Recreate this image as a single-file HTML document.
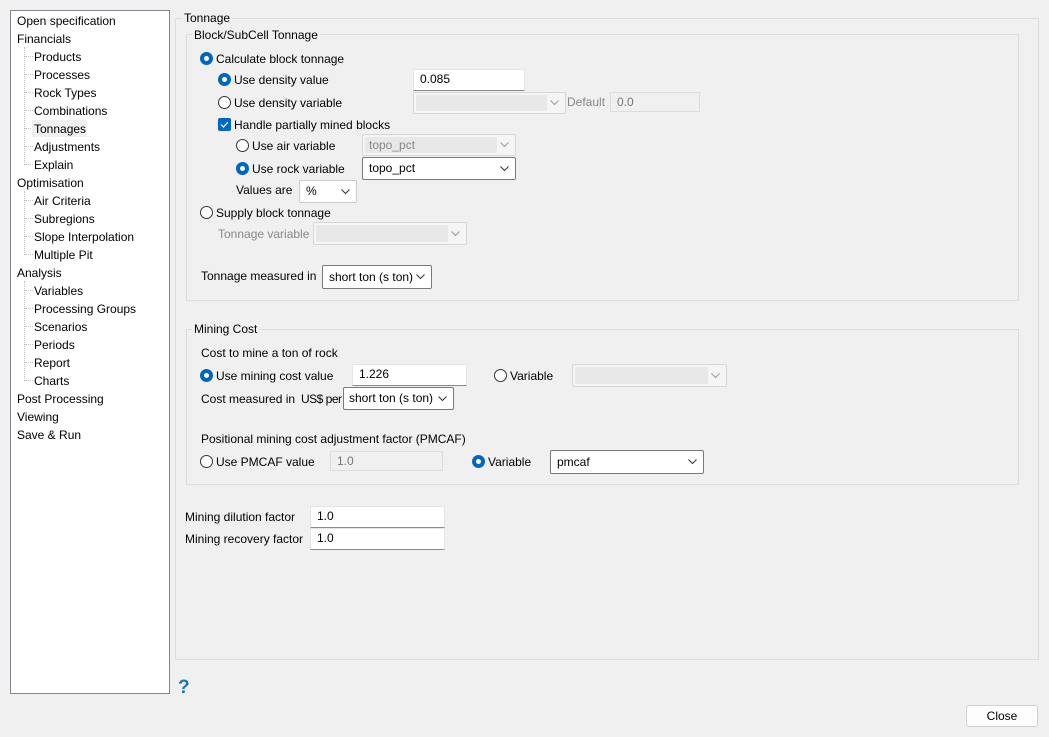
<!DOCTYPE html>
<html><head><meta charset="utf-8"><style>
*{box-sizing:border-box}
body{margin:0;width:1049px;height:737px;background:#f0f0f0;font-family:"Liberation Sans",sans-serif;font-size:12px;color:#000;position:relative;overflow:hidden}
.a{position:absolute;white-space:nowrap;line-height:14px}
.tree{position:absolute;left:10px;top:10px;width:160px;height:684px;background:#fff;border:1px solid #828790}
.grp{position:absolute;border:1px solid #dcdcdc}
.gl{position:absolute;background:#f0f0f0;padding:0 2px;line-height:14px}
.r{position:absolute;width:13px;height:13px;border-radius:50%;border:1px solid #333;background:#fff}
.r.on{background:#0067c0;border-color:#0067c0}
.r.on:after{content:"";position:absolute;left:3px;top:3px;width:5px;height:5px;border-radius:50%;background:#fff}
.in{position:absolute;background:#fff;border:1px solid #e5e5e5;border-bottom:1px solid #8a8a8a;padding-left:6px;line-height:19px}
.in.dis{background:#f0f0f0;border:1px solid #ddd;color:#777}
.cb{position:absolute;background:#fff;border:1px solid #7a7a7a;border-radius:2px;padding-left:6px}
.cb.dis{background:#f5f5f5;border-color:#d6d6d6;color:#888}
.cb.dis .inner{position:absolute;left:2px;top:2px;bottom:2px;right:18px;background:#e8e8e8}
.cb span{position:relative}
.cb svg{position:absolute;right:6px;top:50%;margin-top:-3px}
.dot{position:absolute;border-left:1px dotted #c0c0c0}
.hd{position:absolute;border-top:1px dotted #c0c0c0;width:8px}
.g{color:#888}
</style></head><body>
<div class="tree"></div>
<div class="dot" style="left:24px;top:47px;height:118px"></div>
<div class="dot" style="left:24px;top:191px;height:64px"></div>
<div class="dot" style="left:24px;top:281px;height:100px"></div>
<div class="hd" style="left:25px;top:56px"></div><div class="hd" style="left:25px;top:74px"></div><div class="hd" style="left:25px;top:92px"></div><div class="hd" style="left:25px;top:110px"></div><div class="hd" style="left:25px;top:128px"></div><div class="hd" style="left:25px;top:146px"></div><div class="hd" style="left:25px;top:164px"></div>
<div class="hd" style="left:25px;top:200px"></div><div class="hd" style="left:25px;top:218px"></div><div class="hd" style="left:25px;top:236px"></div><div class="hd" style="left:25px;top:254px"></div>
<div class="hd" style="left:25px;top:290px"></div><div class="hd" style="left:25px;top:308px"></div><div class="hd" style="left:25px;top:326px"></div><div class="hd" style="left:25px;top:344px"></div><div class="hd" style="left:25px;top:362px"></div><div class="hd" style="left:25px;top:380px"></div>
<div style="position:absolute;left:32px;top:120px;width:55px;height:17px;background:#f0f0f0"></div>
<div class="a" style="left:17px;top:14px">Open specification</div>
<div class="a" style="left:17px;top:32px">Financials</div>
<div class="a" style="left:34px;top:50px">Products</div>
<div class="a" style="left:34px;top:68px">Processes</div>
<div class="a" style="left:34px;top:86px">Rock Types</div>
<div class="a" style="left:34px;top:104px">Combinations</div>
<div class="a" style="left:34px;top:122px">Tonnages</div>
<div class="a" style="left:34px;top:140px">Adjustments</div>
<div class="a" style="left:34px;top:158px">Explain</div>
<div class="a" style="left:17px;top:176px">Optimisation</div>
<div class="a" style="left:34px;top:194px">Air Criteria</div>
<div class="a" style="left:34px;top:212px">Subregions</div>
<div class="a" style="left:34px;top:230px">Slope Interpolation</div>
<div class="a" style="left:34px;top:248px">Multiple Pit</div>
<div class="a" style="left:17px;top:266px">Analysis</div>
<div class="a" style="left:34px;top:284px">Variables</div>
<div class="a" style="left:34px;top:302px">Processing Groups</div>
<div class="a" style="left:34px;top:320px">Scenarios</div>
<div class="a" style="left:34px;top:338px">Periods</div>
<div class="a" style="left:34px;top:356px">Report</div>
<div class="a" style="left:34px;top:374px">Charts</div>
<div class="a" style="left:17px;top:392px">Post Processing</div>
<div class="a" style="left:17px;top:410px">Viewing</div>
<div class="a" style="left:17px;top:428px">Save &amp; Run</div>

<div class="grp" style="left:175px;top:18px;width:864px;height:642px"></div>
<div class="gl" style="left:182px;top:11px">Tonnage</div>
<div class="grp" style="left:186px;top:34px;width:833px;height:267px"></div>
<div class="gl" style="left:192px;top:28px">Block/SubCell Tonnage</div>

<div class="r on" style="left:200px;top:52px"></div><div class="a" style="left:216px;top:52px">Calculate block tonnage</div>
<div class="r on" style="left:218px;top:73px"></div><div class="a" style="left:234px;top:73px">Use density value</div>
<div class="in" style="left:413px;top:69px;width:112px;height:22px">0.085</div>
<div class="r" style="left:218px;top:96px"></div><div class="a" style="left:234px;top:96px">Use density variable</div>
<div class="cb dis" style="left:413px;top:92px;width:153px;height:22px"><div class="inner"></div><svg width="9" height="6"><path d="M0.5 0.5L4.5 4.5L8.5 0.5" fill="none" stroke="#999"/></svg></div>
<div class="a g" style="left:567px;top:95px">Default</div>
<div class="in dis" style="left:610px;top:92px;width:90px;height:20px;line-height:18px">0.0</div>
<div style="position:absolute;left:218px;top:118px;width:13px;height:13px;background:#0067c0;border-radius:2px"><svg width="13" height="13" style="position:absolute;left:0;top:0"><path d="M3 6.5L5.5 9L10 4" fill="none" stroke="#fff" stroke-width="1.2"/></svg></div>
<div class="a" style="left:234px;top:118px">Handle partially mined blocks</div>
<div class="r" style="left:236px;top:139px"></div><div class="a" style="left:252px;top:139px">Use air variable</div>
<div class="cb dis" style="left:362px;top:134px;width:154px;height:22px;line-height:20px"><div class="inner"></div><span>topo_pct</span><svg width="9" height="6"><path d="M0.5 0.5L4.5 4.5L8.5 0.5" fill="none" stroke="#999"/></svg></div>
<div class="r on" style="left:236px;top:162px"></div><div class="a" style="left:252px;top:162px">Use rock variable</div>
<div class="cb" style="left:362px;top:157px;width:154px;height:23px;line-height:21px"><span>topo_pct</span><svg width="9" height="6"><path d="M0.5 0.5L4.5 4.5L8.5 0.5" fill="none" stroke="#333"/></svg></div>
<div class="a" style="left:236px;top:183px">Values are</div>
<div class="cb" style="left:299px;top:180px;width:58px;height:23px;line-height:21px;border-color:#ccc"><span>%</span><svg width="9" height="6"><path d="M0.5 0.5L4.5 4.5L8.5 0.5" fill="none" stroke="#333"/></svg></div>
<div class="r" style="left:200px;top:206px"></div><div class="a" style="left:216px;top:206px">Supply block tonnage</div>
<div class="a g" style="left:218px;top:227px">Tonnage variable</div>
<div class="cb dis" style="left:313px;top:222px;width:154px;height:23px"><div class="inner"></div><svg width="9" height="6"><path d="M0.5 0.5L4.5 4.5L8.5 0.5" fill="none" stroke="#999"/></svg></div>
<div class="a" style="left:201px;top:269px">Tonnage measured in</div>
<div class="cb" style="left:322px;top:265px;width:110px;height:24px;line-height:22px"><span>short ton (s ton)</span><svg width="9" height="6"><path d="M0.5 0.5L4.5 4.5L8.5 0.5" fill="none" stroke="#333"/></svg></div>

<div class="grp" style="left:186px;top:329px;width:833px;height:156px"></div>
<div class="gl" style="left:192px;top:322px">Mining Cost</div>
<div class="a" style="left:201px;top:346px">Cost to mine a ton of rock</div>
<div class="r on" style="left:200px;top:369px"></div><div class="a" style="left:216px;top:369px">Use mining cost value</div>
<div class="in" style="left:352px;top:364px;width:115px;height:22px">1.226</div>
<div class="r" style="left:494px;top:369px"></div><div class="a" style="left:510px;top:369px">Variable</div>
<div class="cb dis" style="left:572px;top:364px;width:155px;height:23px"><div class="inner"></div><svg width="9" height="6"><path d="M0.5 0.5L4.5 4.5L8.5 0.5" fill="none" stroke="#999"/></svg></div>
<div class="a" style="left:201px;top:392px">Cost measured in</div><div class="a" style="left:301px;top:392px;letter-spacing:-0.5px">US$ per</div>
<div class="cb" style="left:343px;top:387px;width:111px;height:23px;line-height:21px;padding-left:5px"><span>short ton (s ton)</span><svg width="9" height="6"><path d="M0.5 0.5L4.5 4.5L8.5 0.5" fill="none" stroke="#333"/></svg></div>
<div class="a" style="left:201px;top:432px">Positional mining cost adjustment factor (PMCAF)</div>
<div class="r" style="left:200px;top:455px"></div><div class="a" style="left:216px;top:455px">Use PMCAF value</div>
<div class="in dis" style="left:330px;top:451px;width:113px;height:20px;line-height:18px">1.0</div>
<div class="r on" style="left:472px;top:455px"></div><div class="a" style="left:488px;top:455px">Variable</div>
<div class="cb" style="left:550px;top:450px;width:154px;height:24px;line-height:22px"><span>pmcaf</span><svg width="9" height="6"><path d="M0.5 0.5L4.5 4.5L8.5 0.5" fill="none" stroke="#333"/></svg></div>

<div class="a" style="left:185px;top:510px">Mining dilution factor</div>
<div class="in" style="left:310px;top:506px;width:135px;height:22px">1.0</div>
<div class="a" style="left:185px;top:532px">Mining recovery factor</div>
<div class="in" style="left:310px;top:528px;width:135px;height:22px">1.0</div>

<div class="a" style="left:178px;top:678px;font-size:19px;line-height:20px;font-weight:bold;color:#1a78b0">?</div>
<div style="position:absolute;left:966px;top:705px;width:72px;height:22px;background:#fdfdfd;border:1px solid #d0d0d0;border-radius:3px;text-align:center;line-height:20px">Close</div>
</body></html>
